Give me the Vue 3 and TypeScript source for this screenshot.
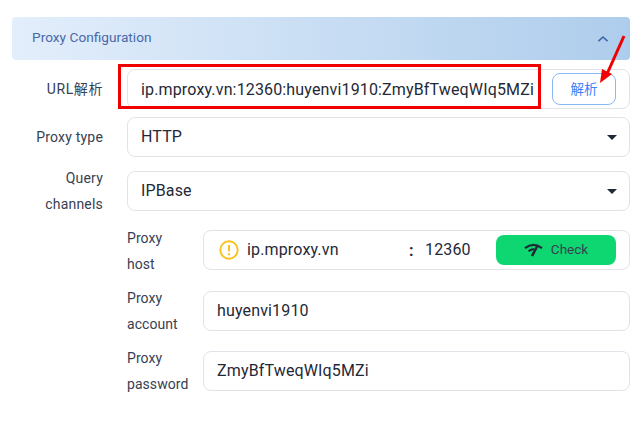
<script setup lang="ts">
const title = 'Proxy Configuration'
</script>

<template>
  <div class="page">
    <div class="header">
      <span class="title">{{ title }}</span>
      <svg class="chev" width="12" height="8" viewBox="0 0 12 8"><path d="M1.5 6.2 6 2l4.500 4.200" fill="none" stroke="#3f63a8" stroke-width="1.600"/></svg>
    </div>
    <div class="form">
      <div class="row">
        <label class="lab one url-lab">URL解析</label>
        <div class="box">
          <span class="val url-val">ip.mproxy.vn:12360:huyenvi1910:ZmyBfTweqWIq5MZi</span>
          <button class="parse">解析</button>
          <div class="redbox"></div>
          <svg class="arrow" width="50" height="60" viewBox="0 0 50 60"><path d="M38 5 21 43" stroke="#f00000" stroke-width="3" fill="none"/><path d="M14 52 16 38 26 43Z" fill="#f00000"/></svg>
        </div>
      </div>
      <div class="row">
        <label class="lab one">Proxy type</label>
        <div class="box"><span class="val">HTTP</span><i class="caret"></i></div>
      </div>
      <div class="row">
        <label class="lab">Query channels</label>
        <div class="box off6"><span class="val">IPBase</span><i class="caret"></i></div>
      </div>
      <div class="sub">
        <label class="slab">Proxy host</label>
        <div class="box host off5">
          <svg class="warn" width="20" height="20" viewBox="0 0 20 20"><circle cx="10" cy="10" r="8.700" fill="none" stroke="#f9c11d" stroke-width="1.900"/><path d="M10 5v6.300M10 13.300v1.900" stroke="#f9c11d" stroke-width="2.100"/></svg>
          <span class="val hostv">ip.mproxy.vn</span>
          <span class="colon">:</span>
          <span class="val port">12360</span>
          <button class="check">
            <svg width="19" height="14" viewBox="0 0 19 14" fill="none" stroke="#1f2937"><path d="M1 5.200Q9.500-1.500 18 5.200" stroke-width="2.300"/><path d="M4.500 8.300Q7 6.300 10 6" stroke-width="2.100"/><path d="M13.800 2 8 13" stroke-width="2.600"/></svg>
            <span class="check-text">Check</span>
          </button>
        </div>
      </div>
      <div class="sub">
        <label class="slab">Proxy account</label>
        <div class="box off6"><span class="val">huyenvi1910</span></div>
      </div>
      <div class="sub">
        <label class="slab">Proxy password</label>
        <div class="box off6"><span class="val">ZmyBfTweqWIq5MZi</span></div>
      </div>
    </div>
  </div>
</template>

<style>
html, body { margin: 0; background: #fff; }
</style>

<style scoped>
.page {
  width: 641px;
  height: 431px;
  box-sizing: border-box;
  padding: 17px 11px 0 12px;
  font-family: Roboto, "Noto Sans CJK SC", sans-serif;
  color: #1f2937;
  overflow: hidden;
}
.header {
  height: 43px;
  box-sizing: border-box;
  padding: 0 21px 4px 20px;
  border-radius: 4px;
  background: linear-gradient(90deg, #e3eefb, #aecdec);
  display: flex;
  align-items: center;
  justify-content: space-between;
}
.title { font-size: 13.700px; color: #4a68a8; }
.chev { margin-top: 4px; }
.form { display: flex; flex-direction: column; gap: 8px; padding-top: 9px; }
.row { display: grid; grid-template-columns: 91px 1fr; column-gap: 24px; align-items: start; }
.sub { display: grid; grid-template-columns: 76px 1fr; margin-left: 115px; align-items: start; }
.lab { text-align: right; font-size: 14px; color: #374151; line-height: 26px; letter-spacing: 0.2px; }
.one { line-height: 40px; }
.url-lab { letter-spacing: 0.6px; }
.slab { font-size: 14px; line-height: 26px; color: #374151; width: 64px; letter-spacing: 0.05px; }
.box {
  position: relative;
  height: 40px;
  box-sizing: border-box;
  border: 1px solid #e1e3e8;
  border-radius: 8px;
  display: flex;
  align-items: center;
  padding: 0 13px;
  background: #fff;
}
.off5 { margin-top: 5px; }
.off6 { margin-top: 6px; }
.val { font-size: 16px; color: #1f2937; white-space: nowrap; margin-top: -1px; letter-spacing: 0.15px; }
.url-val { margin-top: 1px; }
.parse {
  margin-left: auto;
  width: 64px;
  height: 32px;
  border: 1px solid #8ab8f5;
  border-radius: 8px;
  background: #fff;
  color: #3b82f6;
  font: 13.500px Roboto, "Noto Sans CJK SC", sans-serif;
  padding: 0 0 2px;
}
.redbox {
  position: absolute;
  left: -10px;
  top: -6px;
  width: 423px;
  height: 45px;
  box-sizing: border-box;
  border: 3px solid #f00000;
  pointer-events: none;
}
.arrow { position: absolute; left: 458px; top: -39px; }
.caret {
  margin-left: auto;
  margin-right: -1px;
  width: 0;
  height: 0;
  border-left: 5px solid transparent;
  border-right: 5px solid transparent;
  border-top: 5px solid #1f2937;
}
.host { padding: 0 13px 0 15px; }
.warn { margin-right: 8px; flex: none; }
.hostv { width: 162px; }
.colon { font-size: 16px; font-weight: 700; width: 16px; }
.port { width: 71px; }
.check {
  margin-left: auto;
  width: 120px;
  height: 30px;
  border: 0;
  border-radius: 8px;
  background: #0ed671;
  color: #374151;
  font: 13.500px Roboto, sans-serif;
  display: flex;
  align-items: center;
  justify-content: center;
  gap: 8px;
  padding: 0;
}
.check-text { margin-top: -2px; }
</style>
